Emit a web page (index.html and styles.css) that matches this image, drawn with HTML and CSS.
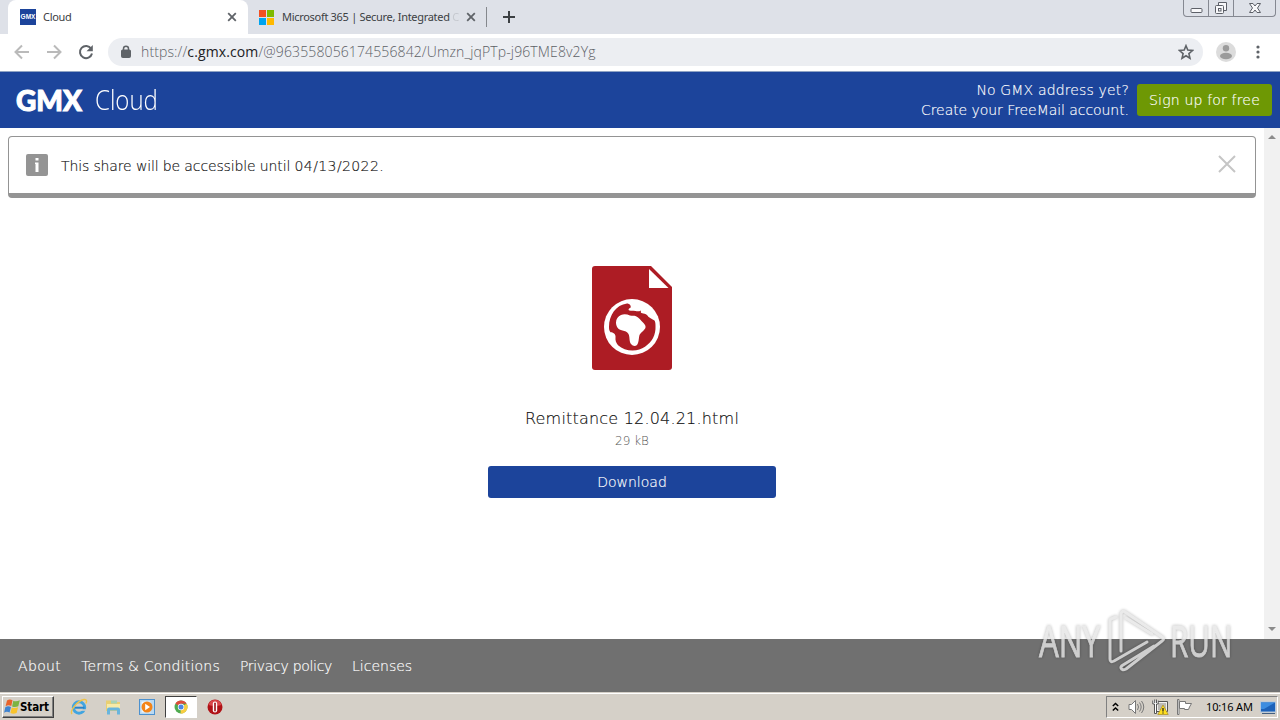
FILE: index.html
```html
<!DOCTYPE html>
<html lang="en">
<head>
    <meta charset="utf-8">
    <title>Cloud</title>
    <link rel="stylesheet" href="styles.css">
</head>
<body>
    <div class="tabstrip">
        <div class="tab tab-active">
            <span class="favicon-gmx">GMX</span>
            <span class="tab-title t-cloud">Cloud</span>
            <svg class="tab-close" width="10" height="10" viewBox="0 0 10 10"><path d="M1.2 1.2l7.6 7.6M8.8 1.2L1.2 8.8"/></svg>
        </div>
        <div class="tab tab-other">
            <span class="favicon-ms"><i></i><i></i><i></i><i></i></span>
            <span class="tab-title t-ms">Microsoft 365 | Secure, Integrated <span class="fade">C</span></span>
            <svg class="tab-close" width="10" height="10" viewBox="0 0 10 10"><path d="M1.2 1.2l7.6 7.6M8.8 1.2L1.2 8.8"/></svg>
        </div>
        <svg class="new-tab" width="12" height="12" viewBox="0 0 12 12"><path d="M6 0v12M0 6h12"/></svg>
        <div class="window-buttons">
            <span class="wb"><svg width="13" height="16" viewBox="0 0 13 16"><rect x="1" y="8.5" width="11" height="4" rx="1"/></svg></span>
            <span class="wb"><svg width="14" height="16" viewBox="0 0 14 16"><path d="M4.5 5V2.5h8v8H10"/><rect x="1.500" y="5.500" width="8" height="8" rx="1"/><rect x="4.500" y="8.500" width="2.500" height="2.500"/></svg></span>
            <span class="wb wb-close"><svg width="14" height="16" viewBox="0 0 14 16"><path d="M1.500 3.500h3.500l2 2.500 2-2.500h3.500L9.500 8l3 4.500H9L7 10l-2 2.500H1.500L4.500 8z"/></svg></span>
        </div>
    </div>

    <div class="toolbar">
        <svg class="nav dim" width="16" height="16" viewBox="0 0 16 16"><path d="M15 8H2M8 1.500L1.500 8 8 14.500"/></svg>
        <svg class="nav dim" width="16" height="16" viewBox="0 0 16 16"><path d="M1 8h13M8 1.500L14.500 8 8 14.500"/></svg>
        <svg class="nav" width="16" height="16" viewBox="0 0 16 16"><path d="M13.200 4.700A6.100 6.100 0 1 0 14 9.500"/><path class="fill" d="M14.800 1v6.300H8.500z"/></svg>
        <div class="omnibox">
            <svg class="lock" width="10" height="13" viewBox="0 0 10 13"><rect x=".5" y="5" width="9" height="7.500" rx="1"/><path d="M2.500 5.500V3.800a2.500 2.500 0 0 1 5 0v1.700"/></svg>
            <span class="url">https://<b>c.gmx.com</b>/@963558056174556842/Umzn_jqPTp-j96TME8v2Yg</span>
            <svg class="star" width="16" height="16" viewBox="0 0 16 16"><path d="M8 1.700l1.800 4.400 4.700.4-3.600 3.100 1.100 4.700L8 11.800l-4 2.500 1.100-4.700-3.600-3.100 4.700-.4z"/></svg>
        </div>
        <svg class="avatar" width="20" height="20" viewBox="0 0 20 20"><circle cx="10" cy="10" r="10" fill="#dcdcdc"/><circle cx="10" cy="6.200" r="3.200" fill="#9b9b9b"/><ellipse cx="10" cy="14" rx="6" ry="3.200" fill="#9b9b9b"/></svg>
        <svg class="dots" width="4" height="14" viewBox="0 0 4 14"><circle cx="2" cy="2" r="1.600"/><circle cx="2" cy="7" r="1.600"/><circle cx="2" cy="12" r="1.600"/></svg>
    </div>

    <header class="header">
        <span class="logo">GMX</span>
        <span class="product">Cloud</span>
        <div class="signup-text">
            <div class="s1">No GMX address yet?</div>
            <div class="s2">Create your FreeMail account.</div>
        </div>
        <a class="btn btn-green"><span>Sign up for free</span></a>
    </header>

    <div class="content">
        <main class="main">
            <div class="notice">
                <svg class="info" width="22" height="22" viewBox="0 0 22 22"><rect width="22" height="22" rx="2" fill="#949494"/><rect x="9.500" y="4" width="3" height="2.500" fill="#fff"/><path d="M9 8.500h3.500V18h-3v-8H9z" fill="#fff"/></svg>
                <span class="notice-text">This share will be accessible until <span class="date">04/13/2022.</span></span>
                <svg class="notice-close" width="18" height="18" viewBox="0 0 18 18"><path d="M1 1l16 16M17 1L1 17"/></svg>
            </div>
            <div class="file">
                <svg width="80" height="104" viewBox="0 0 80 104">
                    <path fill="#ad1c24" d="M3 0h56l21 21v80a3 3 0 0 1-3 3H3a3 3 0 0 1-3-3V3a3 3 0 0 1 3-3z"/>
                    <path fill="#fff" d="M57 3v19h19.500z"/>
                    <circle cx="40" cy="61" r="28" fill="#fff"/>
                    <path fill="#ad1c24" d="M35 37.500C24 39 17 49 17 61c0 3 .5 4 1.500 5.200 3-.2 5.500 2.300 5 5-.3 3 .5 5.500 2.500 8 4 3.300 9 5.300 14.500 5.300 5 0 9-1.500 12.500-3.800C60 76 64 69 63.500 60c0-3-.2-4-1-5.500-3-2-6-3-7.500-5.500-1.500-1.500-3-1.300-5.500-2-.8-.2-.8-1.200-.5-2.500-2 1-3.500 1-5.500.5-3-.3-4.500 0-6-.5-2-.8-.2-2.200 1-2.700 1-2-1-4.300-3.500-4.300z"/>
                    <path fill="#fff" d="M29 49c3-1.300 6-.8 9 .5 2 .7 4 0 6 .7 3 1.300 4.500 4 7.500 6.800 1.500 2 2.300 2.500 2 4.500-.5 2.500-4.500 4.800-6 7.500-.8 2.500-.5 5.500-1.500 8-1 4-5 3.500-7 1-2-2.500-1-7-2.500-10-1.500-2.300-3.500-3-6-3.500-4.500-.7-6.500-4-6.500-8 0-3.500 2-6 5-7.500z"/>
                </svg>
                <div class="file-name"><span>Remittance 12.04.21.html</span></div>
                <div class="file-size"><span>29 kB</span></div>
                <a class="btn btn-blue"><span>Download</span></a>
            </div>
        </main>
        <div class="scrollbar">
            <svg width="8" height="4" viewBox="0 0 8 4"><path d="M0 4l4-4 4 4z"/></svg>
            <svg width="8" height="4" viewBox="0 0 8 4"><path d="M0 0h8L4 4z"/></svg>
        </div>
    </div>

    <footer class="footer">
        <a class="f1">About</a>
        <a class="f2">Terms &amp; Conditions</a>
        <a class="f3">Privacy policy</a>
        <a class="f4">Licenses</a>
    </footer>

    <div class="taskbar">
        <div class="start">
            <svg width="16" height="16" viewBox="0 0 16 16"><path fill="#e8622a" d="M3 1.500c2.200-1.500 4-1 5.500-.2L7.300 7c-1.700-.8-3.700-1-5.700.2z"/><path fill="#7cb342" d="M9.300 1.700c1.900.8 3.900.8 6.500-.4l-1.500 5.900c-2.200 1-4.300 1-6.200.2z"/><path fill="#3f83d0" d="M1.300 8.200c2-1.300 4-1 5.700-.2L5.600 13.500c-1.800-.8-3.600-1-5.500.2z"/><path fill="#f8c32c" d="M7.800 8.400c1.900.8 4.100.9 6.300-.2L12.600 14c-2.200 1-4.100 1-6.200.1z"/></svg>
            <span>Start</span>
        </div>
        <div class="quick">
            <svg width="18" height="18" viewBox="0 0 18 18"><circle cx="9" cy="9.500" r="5.700" fill="none" stroke="#42a5e0" stroke-width="3"/><path d="M5 9.700h9.500" stroke="#2784cb" stroke-width="2"/><path d="M11 11.300h6v1.500h-6z" fill="#d5d0c8"/><path d="M2 16C-.5 13 7 3 14 1.500c3-.5 3 2 1.800 4" fill="none" stroke="#efc34a" stroke-width="1.400"/></svg>
            <svg width="18" height="18" viewBox="0 0 18 18"><path d="M2 2.500h5l1 1.500h8V13H2z" fill="#e9cf72"/><path d="M3 6h13v6H3z" fill="#f8eaa7"/><path d="M7 2.500h6v3H7z" fill="#a9d3b6"/><path d="M3 16.500V11.500q0-2 2-2h9q2 0 2 2v5h-3v-4H6v4z" fill="#69b5dd"/></svg>
            <svg width="18" height="18" viewBox="0 0 18 18"><rect x="1.500" y="1.500" width="15" height="15" fill="#b9d9f2" stroke="#4c91cf"/><rect x="3.500" y="3.500" width="9" height="11" fill="#eef6fc"/><circle cx="9" cy="9" r="5.500" fill="#f38418"/><path d="M7.200 5.800v6.400L12 9z" fill="#fff"/></svg>
            <div class="task-active">
                <svg width="14" height="14" viewBox="0 0 14 14"><circle cx="7" cy="7" r="6.500" fill="#4fab50"/><path d="M7 7L1.400 3.700A6.500 6.500 0 0 1 12.600 3.700H7z" fill="#de4b3b"/><path d="M7 7l5.600-3.300A6.500 6.500 0 0 1 6.500 13.500z" fill="#f8cd40"/><circle cx="7" cy="7" r="3.200" fill="#fff"/><circle cx="7" cy="7" r="2.500" fill="#4a86e4"/></svg>
            </div>
            <svg width="18" height="18" viewBox="0 0 18 18"><circle cx="9" cy="9" r="7.500" fill="#b01116"/><path d="M2.500 7a6.700 6.700 0 0 1 13 0Q9 9 2.500 7z" fill="#d9474a"/><rect x="6.800" y="3.500" width="4.400" height="11" rx="2.200" fill="#fff"/><rect x="8.200" y="4.500" width="1.600" height="9" rx=".8" fill="#9b1014"/></svg>
        </div>
        <div class="tray">
            <svg width="7" height="10" viewBox="0 0 7 10"><path d="M.8 4l2.700-2.500L6.200 4M.8 8.500L3.500 6l2.700 2.500" fill="none" stroke="#000" stroke-width="1.500"/></svg>
            <svg class="i-sound" width="17" height="16" viewBox="0 0 17 16"><path d="M1 5.500h2.500l4-4v13l-4-4H1z" fill="#fff" stroke="#777"/><path d="M9.500 5q2 3 0 6M11.500 3.500q3.300 4.500 0 9M13.500 2q4.500 6 0 12" fill="none" stroke="#777"/></svg>
            <svg class="i-net" width="17" height="16" viewBox="0 0 17 16"><path d="M4.500 2.500h11v10h-11z" fill="#f1f0ee" stroke="#555"/><path d="M6 4h8v7H6z" fill="#bcbab6"/><path d="M.8 1.500v3.500h1.700v9.500h2V5h1.700V1.500M2.700.5v3.500M4.500.5v3.500" fill="#fff" stroke="#555"/><path d="M11 6l5.200 9.500H5.800z" fill="#ffdf1f" stroke="#a98d20" stroke-width=".7"/><path d="M11 9v3.500M11 13.500v1" stroke="#222" stroke-width="1.300"/></svg>
            <svg class="i-flag" width="17" height="16" viewBox="0 0 17 16"><path d="M1.500.5h1.500v15H1.500z" fill="#fff" stroke="#777"/><path d="M3.500 2.500h6v2h6L13.500 8l-1 2.500h-4v-1h-5z" fill="#fff" stroke="#777"/></svg>
            <span class="clock">10:16 AM</span>
            <svg class="i-desk" width="16" height="15" viewBox="0 0 16 15"><rect x=".5" y="2" width="15" height="10" fill="#1c62b9" stroke="#b0c7df"/><path d="M1 2.500h14L4 9H1z" fill="#3c8de0"/><path d="M2 13.500h13" stroke="#435f80"/></svg>
        </div>
    </div>

    <!-- watermark -->
    <div class="watermark">
        <span class="wm-any">ANY</span>
        <svg width="62" height="66" viewBox="0 0 62 66">
            <g fill="none" stroke-linejoin="round" stroke-linecap="round">
                <path class="wm-line" d="M10 9L6 10.500Q4 11 4 13v38q0 4 4 2l33-19M15 43V6q1-4 4-2l37 25q3 2 0 4L20 61q-4 2-5-1-.500-1.500 2-3l31-19M20 10l26 16"/>
            </g>
        </svg>
        <span class="wm-run">RUN</span>
    </div>
</body>
</html>
```
FILE: styles.css
```css
* {
    box-sizing: border-box;
}
body {
    margin: 0;
    width: 1280px;
    height: 720px;
    overflow: hidden;
    display: flex;
    flex-direction: column;
    background: #fff;
    font-family: "DejaVu Sans", Verdana, sans-serif;
    font-size: 14px;
    font-weight: 200;
    position: relative;
}
svg {
    display: block;
    flex: none;
}
span, a {
    white-space: nowrap;
}

/* Tab strip */
.tabstrip {
    height: 34px;
    flex: none;
    display: flex;
    background: #dee1e8;
    align-items: center;
    padding-left: 8px;
}
.tab {
    height: 34px;
    display: flex;
    align-items: center;
}
.tab-active {
    width: 240px;
    background: #fff;
    border-radius: 8px 8px 0 0;
    padding: 0 11px 0 12px;
}
.tab-other {
    width: 239px;
    height: 20px;
    padding: 0 10px 0 11px;
    border-right: 1px solid #85888d;
}
.favicon-gmx {
    width: 16px;
    height: 16px;
    background: #1c449b;
    color: #fff;
    font: bold 6.5px/16px "Liberation Sans", sans-serif;
    text-align: center;
}
.favicon-ms {
    width: 15px;
    height: 15px;
    display: grid;
    grid-template-columns: 7px 7px;
    grid-template-rows: 7px 7px;
    gap: 1px;
}
.favicon-ms i { background: #f25022; }
.favicon-ms i:nth-child(2) { background: #7fba00; }
.favicon-ms i:nth-child(3) { background: #00a4ef; }
.favicon-ms i:nth-child(4) { background: #ffb900; }
.tab-title {
    margin-left: 7px;
    font: 11px/16px "Noto Sans", Tahoma, sans-serif;
    letter-spacing: -.3px;
    color: #3c4043;
}
.t-ms {
    margin-left: 8px;
}
.fade {
    opacity: .15;
}
.tab-close {
    margin-left: auto;
    fill: none;
    stroke: #5f6368;
    stroke-width: 1.8;
}
.new-tab {
    margin-left: 16px;
    fill: none;
    stroke: #3c4043;
    stroke-width: 2;
}
.window-buttons {
    margin: 0 4px 0 auto;
    align-self: flex-start;
    display: flex;
    height: 17px;
    border: 1px solid #858891;
    border-top: 0;
    border-radius: 0 0 4px 4px;
}
.wb {
    width: 25px;
    display: flex;
    justify-content: center;
    border-right: 1px solid #858891;
}
.wb svg {
    fill: #f8f8fa;
    stroke: #5d6068;
}
.wb-close {
    width: 41px;
    border-right: 0;
}

/* Toolbar */
.toolbar {
    height: 38px;
    flex: none;
    display: flex;
    align-items: center;
    padding: 0 20px 2px 14px;
    border-bottom: 1px solid #8fa3c4;
}
.nav {
    margin-right: 16px;
    fill: none;
    stroke: #5f6368;
    stroke-width: 2;
}
.nav .fill {
    fill: #5f6368;
    stroke: none;
}
.dim {
    stroke: #bababa;
}
.omnibox {
    width: 1095px;
    height: 28px;
    margin-left: -2px;
    border-radius: 14px;
    background: #eceef2;
    display: flex;
    align-items: center;
    padding: 0 9px 0 13px;
}
.lock {
    fill: #5f6368;
    stroke: #5f6368;
}
.lock path {
    fill: none;
    stroke-width: 1.5;
}
.url {
    margin-left: 10px;
    font: 300 14px/20px "Open Sans", Tahoma, sans-serif;
    letter-spacing: .12px;
    color: #5d6166;
}
.url b {
    color: #202124;
    font-weight: 400;
}
.star {
    margin-left: auto;
    fill: none;
    stroke: #5f6368;
    stroke-width: 1.6;
}
.avatar {
    margin-left: 13px;
}
.dots {
    margin-left: auto;
    fill: #5f6368;
}

/* GMX header */
.header {
    height: 56px;
    flex: none;
    display: flex;
    align-items: center;
    background: #1c449b;
    color: #fff;
    padding: 0 8px 0 16px;
}
.logo {
    width: 79px;
    font: 900 28px/32px Lato, sans-serif;
    -webkit-text-stroke: 1px #fff;
}
.product {
    font: 300 27px/32px "Open Sans", sans-serif;
    transform: scaleX(.89);
    transform-origin: left;
}
.signup-text,
.btn,
.notice-text,
.file-name,
.footer {
    -webkit-text-stroke: .15px;
}
.signup-text {
    margin-left: auto;
    text-align: right;
    line-height: 20px;
    margin-right: 8px;
}
.s1 { letter-spacing: .15px; }
.s2 { letter-spacing: -.06px; }
.btn {
    height: 32px;
    border-radius: 3px;
    color: #fff;
    display: flex;
    align-items: center;
    justify-content: center;
}
.btn-green {
    width: 135px;
    background: #6e9804;
    letter-spacing: .18px;
}
.btn-blue {
    width: 288px;
    background: #1c449b;
}

/* Share content */
.content {
    height: 511px;
    flex: none;
    display: flex;
}
.main {
    flex: 1;
    padding: 8px 8px 0;
}
.notice {
    height: 62px;
    border: 1px solid #949494;
    border-bottom-width: 5px;
    border-radius: 4px;
    display: flex;
    align-items: center;
    padding: 0 19px 0 17px;
}
.notice-text {
    margin: 1px 0 0 13px;
    color: #111;
    letter-spacing: -.13px;
}
.date {
    letter-spacing: .4px;
}
.notice-close {
    margin: 0 0 2px auto;
    fill: none;
    stroke: #c5c5c5;
    stroke-width: 2;
}
.file {
    display: flex;
    flex-direction: column;
    align-items: center;
    padding-top: 68px;
}
.file-name {
    margin-top: 37px;
    font-size: 16px;
    line-height: 24px;
    letter-spacing: .2px;
    color: #111;
}
.file-size {
    font-size: 12px;
    line-height: 20px;
    margin-bottom: 15px;
    color: #555;
}
.scrollbar {
    width: 16px;
    background: #f1f1f1;
    display: flex;
    flex-direction: column;
    align-items: center;
    justify-content: space-between;
    padding: 7px 0 8px;
    fill: #8b8b8b;
}

.footer {
    height: 53px;
    flex: none;
    background: #707070;
    color: #fff;
    display: flex;
    align-items: center;
    gap: 20px;
    padding-left: 18px;
}
.f1 { letter-spacing: .35px; }
.f2 { letter-spacing: .2px; }
.f3 { letter-spacing: -.3px; }

/* Taskbar */
.taskbar {
    height: 28px;
    flex: none;
    background: #d5d0c8;
    border-top: 1px solid #d5d0c8;
    box-shadow: inset 0 1px #fff;
    display: flex;
    align-items: center;
    padding: 1px 2px 0;
}
.start {
    width: 52px;
    height: 22px;
    border: 1px solid #404040;
    border-top-color: #fff;
    border-left-color: #fff;
    box-shadow: inset -1px -1px #808080;
    display: flex;
    align-items: center;
    padding-left: 1px;
    font: bold 11.5px/16px "DejaVu Sans Condensed", Tahoma, sans-serif;
    letter-spacing: -.1px;
    color: #000;
}
.quick {
    display: flex;
    align-items: center;
    margin-left: 16px;
    gap: 16px;
}
.task-active {
    width: 32px;
    height: 22px;
    margin: 0 -7px;
    background: #fff;
    border: 1px solid #fff;
    border-top-color: #404040;
    border-left-color: #404040;
    display: flex;
    align-items: center;
    justify-content: center;
}
.tray {
    width: 172px;
    height: 22px;
    margin-left: auto;
    border: 1px solid #fff;
    border-top-color: #808080;
    border-left-color: #808080;
    display: flex;
    align-items: center;
    padding-left: 5px;
}
.i-sound { margin-left: 9px; }
.i-net { margin-left: 7px; }
.i-flag { margin-left: 7px; }
.clock {
    margin-left: 13px;
    width: 47px;
    font: 11px/16px "Noto Sans", Tahoma, sans-serif;
    letter-spacing: -.15px;
    color: #000;
}
.i-desk { margin-left: 7px; }

.watermark {
    position: absolute;
    left: 1039px;
    top: 607px;
    height: 68px;
    width: 196px;
    display: flex;
    align-items: center;
    filter: drop-shadow(0 0 1.5px rgba(0, 0, 0, .35));
    opacity: .8;
    font: 43px/64px "Open Sans", sans-serif;
    color: #e6e6e6;
}
.watermark span {
    width: 62px;
    transform: scaleX(.73);
    transform-origin: left;
    -webkit-text-stroke: .8px #e6e6e6;
}
.watermark .wm-run {
    width: 60px;
    transform: scaleX(.69);
}
.watermark svg {
    margin: 0 2px 0 5px;
}
.wm-line {
    stroke: #e6e6e6;
    stroke-width: 3;
}
```
